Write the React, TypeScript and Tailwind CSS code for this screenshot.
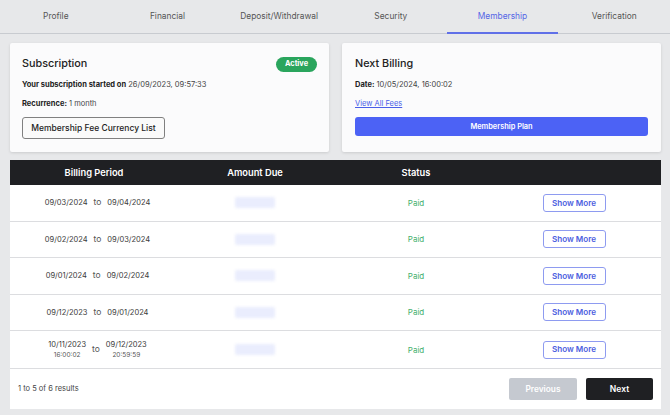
import React from 'react'

const tabs = ['Profile', 'Financial', 'Deposit/Withdrawal', 'Security', 'Membership', 'Verification']

type Row = { from: string; fromTime?: string; to: string; toTime?: string }

const rows: Row[] = [
  { from: '09/03/2024', to: '09/04/2024' },
  { from: '09/02/2024', to: '09/03/2024' },
  { from: '09/01/2024', to: '09/02/2024' },
  { from: '09/12/2023', to: '09/01/2024' },
  { from: '10/11/2023', fromTime: '16:00:02', to: '09/12/2023', toTime: '20:59:59' },
]

function DateCell({ date, time }: { date: string; time?: string }) {
  return (
    <div className="flex flex-col items-center leading-none">
      <span className="text-[7.5px] text-[#3a3a3a]">{date}</span>
      {time && <span className="mt-[3px] text-[6.5px] text-[#555]">{time}</span>}
    </div>
  )
}

export default function App() {
  return (
    <div
      className="w-[670px] h-[415px] overflow-hidden bg-[#e7e8ea] text-[#222]"
      style={{ fontFamily: 'Inter, "Noto Sans", sans-serif' }}
    >
      {/* Tabs */}
      <div className="grid grid-cols-6 h-[34px] border-b border-[#c8cbd0]">
        {tabs.map((t) => (
          <div
            key={t}
            className={
              t === 'Membership'
                ? 'flex items-center justify-center text-[8.4px] text-[#5566e6] border-b-2 border-[#6070e8] -mb-px pt-px'
                : 'flex items-center justify-center text-[8.4px] text-[#555]'
            }
          >
            {t}
          </div>
        ))}
      </div>

      <div className="pl-[10px] pr-[9px] pt-[9px]">
        {/* Cards */}
        <div className="grid grid-cols-2 gap-[13px]">
          <div className="h-[109px] bg-[#fbfbfc] rounded-[2px] shadow-[0_1px_3px_rgba(0,0,0,0.12)] px-[12px] pt-[13px]">
            <div className="flex items-center justify-between h-[16px]">
              <span className="text-[10.8px] font-medium text-[#222]">Subscription</span>
              <span className="rounded-full bg-[#2aa55d] w-[41px] h-[15px] flex items-center justify-center text-[7.4px] font-bold text-white">
                Active
              </span>
            </div>
            <p className="mt-[8px] leading-[10px] text-[7.5px] text-[#444]">
              <span className="font-bold text-[#222]">Your subscription started on</span> 26/09/2023, 09:57:33
            </p>
            <p className="mt-[9px] leading-[10px] text-[7.5px] text-[#444]">
              <span className="font-bold text-[#222]">Recurrence:</span> 1 month
            </p>
            <button className="mt-[8px] h-[22px] w-[143px] border border-[#808080] rounded-[3px] bg-[#fafafa] text-[8.5px] font-medium text-[#222]">
              Membership Fee Currency List
            </button>
          </div>

          <div className="h-[109px] bg-[#fbfbfc] rounded-[2px] shadow-[0_1px_3px_rgba(0,0,0,0.12)] px-[13px] pt-[13px]">
            <div className="flex items-center h-[16px]">
              <span className="text-[10.8px] font-medium text-[#222]">Next Billing</span>
            </div>
            <p className="mt-[8px] leading-[10px] text-[7.5px] text-[#444]">
              <span className="font-bold text-[#222]">Date:</span> 10/05/2024, 16:00:02
            </p>
            <p className="mt-[9px] leading-[10px] text-[7.5px] text-[#4a5ee8] underline">View All Fees</p>
            <button className="mt-[8px] w-full h-[19px] rounded-[3px] bg-[#4c62f5] text-[7.4px] font-semibold text-white">
              Membership Plan
            </button>
          </div>
        </div>

        {/* Table */}
        <div className="mt-[8px] bg-white">
          <div className="grid grid-cols-[168px_154px_168px_1fr] h-[25px] bg-[#1f2023] text-white text-[9.3px] font-semibold">
            <div className="flex items-center justify-center">Billing Period</div>
            <div className="flex items-center justify-center">Amount Due</div>
            <div className="flex items-center justify-center">Status</div>
            <div />
          </div>

          {rows.map((r, i) => (
            <div
              key={i}
              className={
                i === rows.length - 1
                  ? 'grid grid-cols-[168px_154px_168px_1fr] h-[38px] border-b border-[#dcdde0]'
                  : 'grid grid-cols-[168px_154px_168px_1fr] h-[36.5px] border-b border-[#dcdde0]'
              }
            >
              <div className="flex items-center justify-center gap-[6px] pl-[7px]">
                <DateCell date={r.from} time={r.fromTime} />
                <span className="text-[8.5px] text-[#555]">to</span>
                <DateCell date={r.to} time={r.toTime} />
              </div>
              <div className="flex items-center justify-center">
                <div className="w-[40px] h-[11px] rounded-[2px] bg-[#eaedfd] blur-[1.5px]" />
              </div>
              <div className="flex items-center justify-center text-[8px] text-[#44b06e]">Paid</div>
              <div className="flex items-center justify-center pr-[13px]">
                <button className="w-[63px] h-[18px] rounded-[3px] border border-[#8e9bf0] text-[8.1px] font-semibold text-[#4d5ee0] bg-white">
                  Show More
                </button>
              </div>
            </div>
          ))}

          <div className="flex items-center justify-between h-[40px] pl-[8px] pr-[8px]">
            <span className="text-[7.5px] text-[#444]">1 to 5 of 6 results</span>
            <div className="flex gap-[9px]">
              <button className="w-[68px] h-[22px] rounded-[2px] bg-[#c5c9d0] text-[8.3px] font-semibold text-white">
                Previous
              </button>
              <button className="w-[67px] h-[22px] rounded-[2px] bg-[#1f2023] text-[8.5px] font-semibold text-white">
                Next
              </button>
            </div>
          </div>
        </div>
      </div>
    </div>
  )
}
